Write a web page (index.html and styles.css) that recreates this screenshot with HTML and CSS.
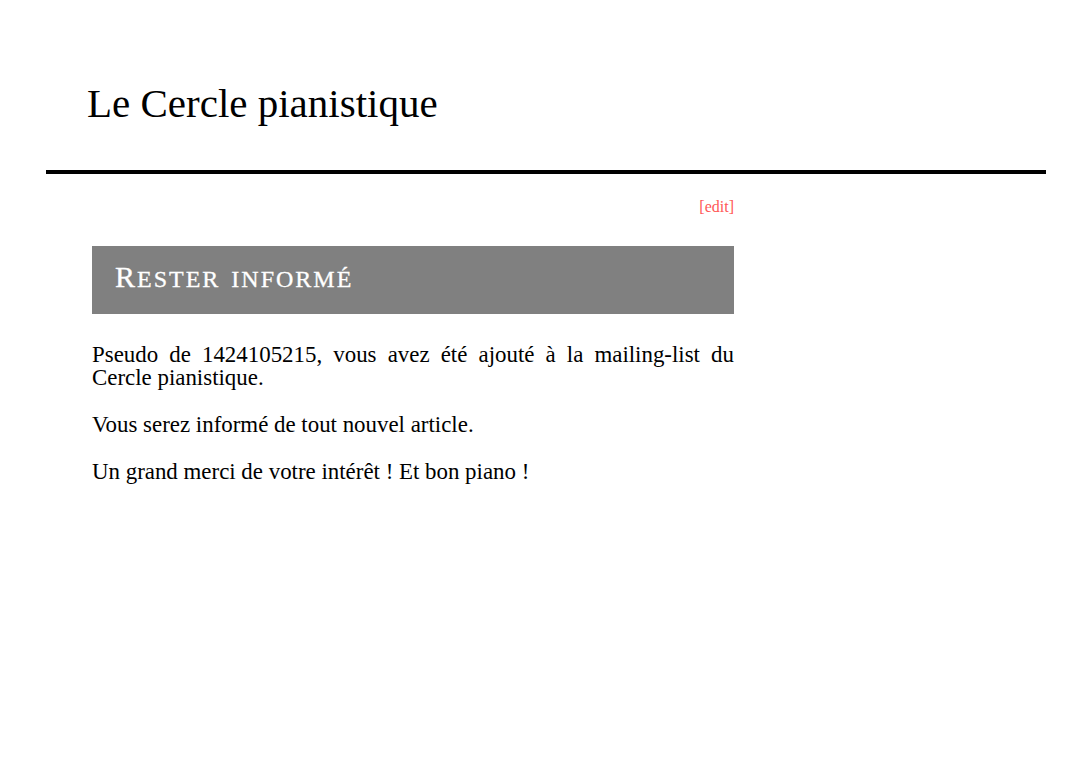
FILE: index.html
```html
<!DOCTYPE html>
<html lang="fr">
<head>
<meta charset="utf-8">
<title>Le Cercle pianistique</title>
<link rel="stylesheet" href="styles.css">
</head>
<body>
<div class="page">
  <header class="site-header">
    <h1 class="site-title">Le Cercle pianistique</h1>
  </header>
  <main class="content">
    <div class="edit-row"><a class="edit-link" href="#">[edit]</a></div>
    <h2 class="section-title">Rester informé</h2>
    <p class="text">Pseudo de 1424105215, vous avez été ajouté à la mailing-list du Cercle pianistique.</p>
    <p class="text">Vous serez informé de tout nouvel article.</p>
    <p class="text">Un grand merci de votre intérêt ! Et bon piano !</p>
  </main>
</div>
</body>
</html>
```
FILE: styles.css
```css
html, body {
  margin: 0;
  padding: 0;
  background: #fff;
}

body {
  font-family: "Liberation Serif", "Times New Roman", serif;
  color: #000;
}

.page {
  width: 1000px;
  margin-left: 46px;
}

.site-header {
  padding: 80px 0 44px 41px;
  border-bottom: 4px solid #000;
}

.site-title {
  margin: 0;
  font-size: 41px;
  font-weight: normal;
  line-height: 46px;
}

.content {
  width: 642px;
  margin-left: 46px;
}

.edit-row {
  margin-top: 24px;
  text-align: right;
  font-size: 16px;
  line-height: 18px;
}

.edit-link {
  color: #ff5757;
  text-decoration: none;
}

.section-title {
  margin: 30px 0 0;
  height: 32px;
  background: #808080;
  color: #fff;
  font-size: 24px;
  font-weight: normal;
  text-transform: uppercase;
  letter-spacing: 2px;
  word-spacing: 3px;
  line-height: 32px;
  padding: 17px 23px 19px;
  -webkit-text-stroke: 0.3px #fff;
}

.section-title::first-letter {
  font-size: 30px;
  line-height: 20px;
}

.text {
  margin: 29px 0 24px;
  font-size: 22.9px;
  line-height: 23px;
  text-align: justify;
}

.text + .text {
  margin-top: 0;
}
```
